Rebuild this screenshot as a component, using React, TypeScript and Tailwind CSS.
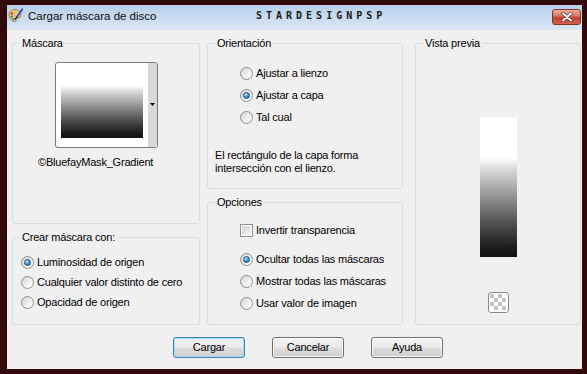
import type { ReactNode } from 'react';

function Radio({ checked }: { checked?: boolean }) {
  return (
    <span className="flex h-[13px] w-[13px] shrink-0 items-center justify-center rounded-full border border-[#8e8f8f] bg-[linear-gradient(135deg,#d3d3d3,#f4f4f4_65%,#ffffff)]">
      {checked && (
        <span className="h-[7px] w-[7px] rounded-full border border-[#1d4f7c] bg-[radial-gradient(circle_at_35%_30%,#c8ecff,#3a9ae0_50%,#0f4f8a)]" />
      )}
    </span>
  );
}

function RadioRow({ label, checked, className = '' }: { label: string; checked?: boolean; className?: string }) {
  return (
    <div className={`flex items-center gap-[3px] ${className}`}>
      <Radio checked={checked} />
      <span>{label}</span>
    </div>
  );
}

function Group({ title, className = '', children }: { title: string; className?: string; children?: ReactNode }) {
  return (
    <fieldset className={`min-w-0 rounded-[3px] border border-[#d5dfe5] ${className}`}>
      <legend className="ml-[7px] px-[2px] leading-[13px]">{title}</legend>
      {children}
    </fieldset>
  );
}

function WinButton({ label, primary }: { label: string; primary?: boolean }) {
  return (
    <button
      className={`flex h-[21px] w-[72px] items-center justify-center rounded-[3px] border bg-[linear-gradient(#f3f3f3,#ebebeb_48%,#dddddd_52%,#cfcfcf)] ${
        primary
          ? 'border-[#3c7fb1] shadow-[inset_0_0_0_1px_#a6dcf6]'
          : 'border-[#707070] shadow-[inset_0_0_0_1px_#fbfbfb]'
      }`}
    >
      {label}
    </button>
  );
}

function PaletteIcon() {
  return (
    <svg width="15" height="15" viewBox="0 0 15 15">
      <path d="M7 1.5C3.5 1.5 1 4 1 7.2 1 10.5 3.6 13.5 6.8 13.5c1.4 0 1.6-1 1-1.8-.6-.8-.2-1.8.9-1.8h1.6c1.6 0 2.7-1 2.7-2.6C13 4 10.4 1.5 7 1.5z" fill="#e7c78f" stroke="#8a6a3a" strokeWidth="0.8" />
      <circle cx="4" cy="5.5" r="1.3" fill="#d83b2b" />
      <circle cx="6.8" cy="3.9" r="1.2" fill="#f2c230" />
      <circle cx="3.7" cy="8.7" r="1.2" fill="#3a9a3a" />
      <circle cx="5.6" cy="11.2" r="1.1" fill="#2e5fc8" />
      <path d="M14.2 1.2 8.6 9.4" stroke="#2a4fb8" strokeWidth="1.8" strokeLinecap="round" />
      <path d="M8.8 9.1 7.6 11.2" stroke="#4a3a2a" strokeWidth="1.6" strokeLinecap="round" />
    </svg>
  );
}

function CheckerIcon() {
  const cells = [];
  for (let r = 0; r < 4; r++) {
    for (let c = 0; c < 4; c++) {
      if ((r + c) % 2 === 0) cells.push(<rect key={`${r}-${c}`} x={2 + c * 4} y={2 + r * 4} width="4" height="4" fill="#c4c4c4" />);
    }
  }
  return (
    <svg width="21" height="21" viewBox="0 0 21 21">
      <rect x="0.5" y="0.5" width="20" height="20" rx="2.5" fill="#ffffff" stroke="#8a8a8a" />
      {cells}
    </svg>
  );
}

const maskGradient =
  'bg-[linear-gradient(to_bottom,#ffffff_0%,#ffffff_29%,#d6d6d6_38%,#9a9a9a_55%,#575757_74%,#1e1e1e_92%,#111111_100%)]';

export default function App() {
  return (
    <div className="flex h-[374px] w-[587px] flex-col bg-[#330909] pb-[5px] pl-[7px] pr-[5px] pt-[5px] font-['Liberation_Sans',Arial,sans-serif] text-[11px] tracking-[-0.2px] text-black">
      {/* Title bar */}
      <div className="relative flex h-[25px] shrink-0 items-start bg-[linear-gradient(#b7cfe9,#c9dcf0_50%,#d9e6f4)]">
        <div className="ml-[1px] mt-[3px]">
          <PaletteIcon />
        </div>
        <span className="ml-[5px] mt-[4px] text-[11.5px] leading-[15px] tracking-normal text-[#0b0b0b]">
          Cargar máscara de disco
        </span>
        <span className="absolute left-[249px] top-[5px] font-['DejaVu_Sans_Mono',monospace] text-[10px] font-bold leading-[12px] tracking-[4px] text-[#1a1a1a]">
          STARDESIGNPSP
        </span>
        <div className="ml-auto mr-[1px] mt-[4px] flex h-[16px] w-[29px] items-center justify-center rounded-[3px] border border-[#8a3326] bg-[linear-gradient(#e9ad9e,#d67e6c_40%,#c4412f_55%,#d0614f)]">
          <svg width="12" height="10" viewBox="0 0 12 10">
            <path d="M2 1.5 10 8.5M10 1.5 2 8.5" stroke="#6b2a22" strokeWidth="3.4" strokeLinecap="round" />
            <path d="M2 1.5 10 8.5M10 1.5 2 8.5" stroke="#ffffff" strokeWidth="2" strokeLinecap="round" />
          </svg>
        </div>
      </div>

      {/* Body */}
      <div className="flex flex-1 flex-col bg-[#f0f0f0] pl-[5px] pr-[1px] pt-[7px] leading-[13px]">
        <div className="flex h-[288px] gap-[7px]">
          {/* Left column */}
          <div className="flex w-[188px] flex-col gap-[7px]">
            <Group title="Máscara" className="h-[187px]">
              <div className="ml-[42px] mt-[12px] flex h-[86px] w-[103px] overflow-hidden rounded-[3px] border border-[#7a7a7a] bg-white">
                <div className="flex flex-1 pl-[5px] pt-[1px]">
                  <div className={`h-[74px] w-[82px] ${maskGradient}`} />
                </div>
                <div className="flex w-[9px] items-start justify-center bg-[#d8d8d8] pt-[40px]">
                  <svg width="5" height="3" viewBox="0 0 5 3">
                    <path d="M0 0h5L2.5 3z" fill="#000" />
                  </svg>
                </div>
              </div>
              <div className="ml-[25px] mt-[8px]">©BluefayMask_Gradient</div>
            </Group>
            <Group title="Crear máscara con:" className="flex-1">
              <div className="ml-[8px] mt-[8px] flex flex-col">
                <RadioRow label="Luminosidad de origen" checked className="h-[20px]" />
                <RadioRow label="Cualquier valor distinto de cero" className="h-[20px]" />
                <RadioRow label="Opacidad de origen" className="h-[20px]" />
              </div>
            </Group>
          </div>

          {/* Middle column */}
          <div className="flex w-[196px] flex-col gap-[7px]">
            <Group title="Orientación" className="h-[152px]">
              <div className="ml-[32px] mt-[12px] flex flex-col">
                <RadioRow label="Ajustar a lienzo" className="h-[22px]" />
                <RadioRow label="Ajustar a capa" checked className="h-[22px]" />
                <RadioRow label="Tal cual" className="h-[22px]" />
              </div>
              <p className="ml-[7px] mt-[21px]">
                El rectángulo de la capa forma
                <br />
                intersección con el lienzo.
              </p>
            </Group>
            <Group title="Opciones" className="flex-1">
              <div className="ml-[32px] mt-[11px] flex flex-col">
                <div className="flex h-[20px] items-center gap-[3px]">
                  <span className="flex h-[13px] w-[13px] shrink-0 items-center justify-center border border-[#8e8f8f] bg-white">
                    <span className="h-[9px] w-[9px] bg-[linear-gradient(135deg,#d2d2d2,#f4f4f4)]" />
                  </span>
                  <span>Invertir transparencia</span>
                </div>
                <div className="mt-[8px] flex flex-col">
                  <RadioRow label="Ocultar todas las máscaras" checked className="h-[22px]" />
                  <RadioRow label="Mostrar todas las máscaras" className="h-[22px]" />
                  <RadioRow label="Usar valor de imagen" className="h-[22px]" />
                </div>
              </div>
            </Group>
          </div>

          {/* Right column */}
          <Group title="Vista previa" className="ml-[5px] flex-1">
            <div className="flex flex-col items-center">
              <div className={`mt-[67px] h-[140px] w-[37px] ${maskGradient}`} />
              <div className="mt-[35px]">
                <CheckerIcon />
              </div>
            </div>
          </Group>
        </div>

        {/* Buttons */}
        <div className="ml-[161px] mt-[12px] flex gap-[27px]">
          <WinButton label="Cargar" primary />
          <WinButton label="Cancelar" />
          <WinButton label="Ayuda" />
        </div>
      </div>
    </div>
  );
}
